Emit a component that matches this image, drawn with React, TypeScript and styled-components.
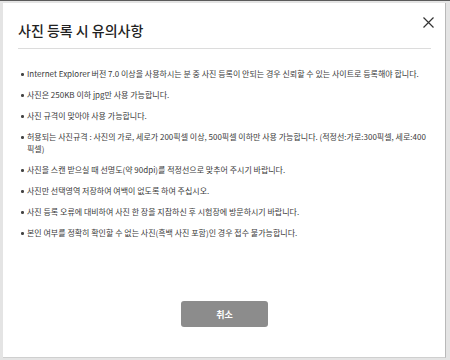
import React from 'react';
import styled, { createGlobalStyle } from 'styled-components';

const GlobalStyle = createGlobalStyle`
  html, body {
    margin: 0;
    padding: 0;
    width: 450px;
    height: 360px;
    overflow: hidden;
    background: #e4e4e4;
    font-family: "Noto Sans CJK KR", "Noto Sans", sans-serif;
  }
  * {
    box-sizing: border-box;
  }
`;

const Page = styled.div`
  width: 450px;
  height: 360px;
  border-top: 1px solid #5a5a5a;
  padding: 2px 0 0 3px;
`;

const Modal = styled.div`
  position: relative;
  width: 443px;
  height: 355px;
  background: #fff;
  border-right: 1px solid #b9b9b9;
  border-bottom: 1px solid #cfcfcf;
  padding: 17px 14px 0 15px;
  display: flex;
  flex-direction: column;
`;

const Title = styled.h2`
  margin: 0;
  font-size: 14px;
  font-weight: 500;
  color: #222;
  line-height: 20px;
  padding-bottom: 8px;
  border-bottom: 1px solid #dcdcdc;
`;

const CloseButton = styled.button`
  position: absolute;
  top: 9px;
  right: 7px;
  width: 20px;
  height: 20px;
  padding: 0;
  border: 0;
  background: transparent;
  display: flex;
  align-items: center;
  justify-content: center;
  cursor: pointer;
`;

const List = styled.ul`
  list-style: none;
  margin: 19px 0 0;
  padding: 0 0 0 2px;
`;

const Item = styled.li`
  position: relative;
  padding-left: 7px;
  margin-bottom: 9px;
  font-size: 8px;
  line-height: 12px;
  color: #3a3a3a;

  &::before {
    content: '';
    position: absolute;
    left: 1px;
    top: 5px;
    width: 2.5px;
    height: 2.5px;
    border-radius: 50%;
    background: #444;
  }
`;

const Footer = styled.div`
  margin-top: auto;
  padding-bottom: 30px;
  display: flex;
  justify-content: center;
`;

const CancelButton = styled.button`
  width: 87px;
  height: 26px;
  border: 0;
  border-radius: 3px;
  background: #8c8c8c;
  color: #fff;
  font-family: inherit;
  font-size: 9px;
  font-weight: 700;
  cursor: pointer;
`;

const notes = [
  'Internet Explorer 버전 7.0 이상을 사용하시는 분 중 사진 등록이 안되는 경우 신뢰할 수 있는 사이트로 등록해야 합니다.',
  '사진은 250KB 이하 jpg만 사용 가능합니다.',
  '사진 규격이 맞아야 사용 가능합니다.',
  '허용되는 사진규격 : 사진의 가로, 세로가 200픽셀 이상, 500픽셀 이하만 사용 가능합니다. (적정선:가로:300픽셀, 세로:400픽셀)',
  '사진을 스캔 받으실 때 선명도(약 90dpi)를 적정선으로 맞추어 주시기 바랍니다.',
  '사진만 선택영역 저장하여 여백이 없도록 하여 주십시오.',
  '사진 등록 오류에 대비하여 사진 한 장을 지참하신 후 시험장에 방문하시기 바랍니다.',
  '본인 여부를 정확히 확인할 수 없는 사진(흑백 사진 포함)인 경우 접수 불가능합니다.',
];

const App: React.FC = () => {
  return (
    <>
      <GlobalStyle />
      <Page>
        <Modal>
          <Title>사진 등록 시 유의사항</Title>
          <CloseButton aria-label="닫기">
            <svg width="11" height="11" viewBox="0 0 11 11">
              <path d="M0.5 0.5L10.5 10.5M10.5 0.5L0.5 10.5" stroke="#333" strokeWidth="1.2" />
            </svg>
          </CloseButton>
          <List>
            {notes.map((text, i) => (
              <Item key={i}>{text}</Item>
            ))}
          </List>
          <Footer>
            <CancelButton>취소</CancelButton>
          </Footer>
        </Modal>
      </Page>
    </>
  );
};

export default App;
